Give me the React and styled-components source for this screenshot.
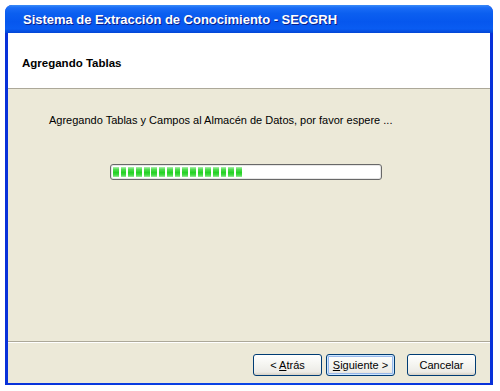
import React from "react";
import styled, { createGlobalStyle, css } from "styled-components";

const Global = createGlobalStyle`
  html, body { margin: 0; padding: 0; background: #ffffff; }
  body { font-family: "Liberation Sans", Arial, sans-serif; }
`;

const Page = styled.div`
  padding: 5px 7px 6px 5px;
  width: 500px;
  height: 391px;
  box-sizing: border-box;
`;

const Window = styled.div`
  display: flex;
  flex-direction: column;
  height: 100%;
  border-radius: 7px 7px 0 0;
  overflow: hidden;
  background: linear-gradient(to right, #0831d9 0%, #0b45e6 50%, #0831d9 100%);
`;

const TitleBar = styled.div`
  height: 28px;
  flex: 0 0 28px;
  display: flex;
  align-items: center;
  padding-left: 18px;
  background: linear-gradient(
    to bottom,
    #3a8cf7 0%,
    #1a6cf6 10%,
    #0b5ff0 30%,
    #0657ee 60%,
    #095cf2 85%,
    #0346d6 100%
  );
  color: #ffffff;
  font-family: "Liberation Sans", Arial, sans-serif;
  font-weight: bold;
  font-size: 13px;
  text-shadow: 1px 1px 0 #0a1e8a;
  letter-spacing: -0.02px;
`;

const Frame = styled.div`
  flex: 1;
  display: flex;
  flex-direction: column;
  margin: 0 3px 2px 3px;
  background: #ece9d8;
`;

const Header = styled.div`
  height: 56px;
  flex: 0 0 56px;
  background: #ffffff;
  border-bottom: 1px solid #aca899;
  display: flex;
  align-items: center;
  padding-left: 14px;
  padding-top: 4px;
  box-sizing: border-box;
  font-size: 11.5px;
  font-weight: bold;
  color: #000000;
`;

const Content = styled.div`
  flex: 1;
  display: flex;
  flex-direction: column;
  padding: 25px 0 0 41px;
  font-size: 11px;
  color: #000000;
`;

const Message = styled.div`
  line-height: 13px;
`;

const ProgressTrack = styled.div`
  margin: 37px 0 0 61px;
  width: 272px;
  height: 16px;
  box-sizing: border-box;
  border: 1px solid #686868;
  border-radius: 3px;
  background: #ffffff;
  display: flex;
  align-items: center;
  gap: 1.9px;
  padding: 0 2px;
  box-shadow: inset 0 0 0 1px #e6e6e6;
`;

const Block = styled.div`
  width: 5.8px;
  height: 10px;
  background: linear-gradient(
    to bottom,
    #aef0ae 0%,
    #4fdc4f 25%,
    #25d225 55%,
    #42da42 80%,
    #9ceb9c 100%
  );
`;

const Footer = styled.div`
  flex: 0 0 42px;
  height: 42px;
  box-sizing: border-box;
  border-top: 1px solid #aca899;
  box-shadow: inset 0 1px 0 #ffffff;
  display: flex;
  align-items: flex-start;
  justify-content: flex-end;
  padding: 12px 14px 0 0;
`;

const Button = styled.button`
  width: 69px;
  height: 22px;
  box-sizing: border-box;
  padding: 0;
  margin: 0;
  font-family: "Liberation Sans", Arial, sans-serif;
  font-size: 11px;
  color: #000000;
  border: 1px solid #003c74;
  border-radius: 3px;
  background: linear-gradient(to bottom, #ffffff 0%, #f4f4f0 50%, #ecebe6 85%, #d6d0c5 100%);
  margin-left: ${(p) => p.$gap}px;
  ${(p) =>
    p.$focused &&
    css`
      box-shadow: inset 0 0 0 1px #cee7ff, inset 0 0 0 2px #98b8ea;
    `}
`;

const Key = styled.span`
  text-decoration: underline;
  text-underline-offset: 1px;
`;

export default function App() {
  const blocks = Array.from({ length: 17 });
  return (
    <>
      <Global />
      <Page>
        <Window>
          <TitleBar>Sistema de Extracción de Conocimiento - SECGRH</TitleBar>
          <Frame>
            <Header>Agregando Tablas</Header>
            <Content>
              <Message>
                Agregando Tablas y Campos al Almacén de Datos, por favor espere ...
              </Message>
              <ProgressTrack>
                {blocks.map((_, i) => (
                  <Block key={i} />
                ))}
              </ProgressTrack>
            </Content>
            <Footer>
              <Button $gap={0}>
                &lt; <Key>A</Key>trás
              </Button>
              <Button $gap={4} $focused>
                <Key>S</Key>iguiente &gt;
              </Button>
              <Button $gap={12}>Cancelar</Button>
            </Footer>
          </Frame>
        </Window>
      </Page>
    </>
  );
}
